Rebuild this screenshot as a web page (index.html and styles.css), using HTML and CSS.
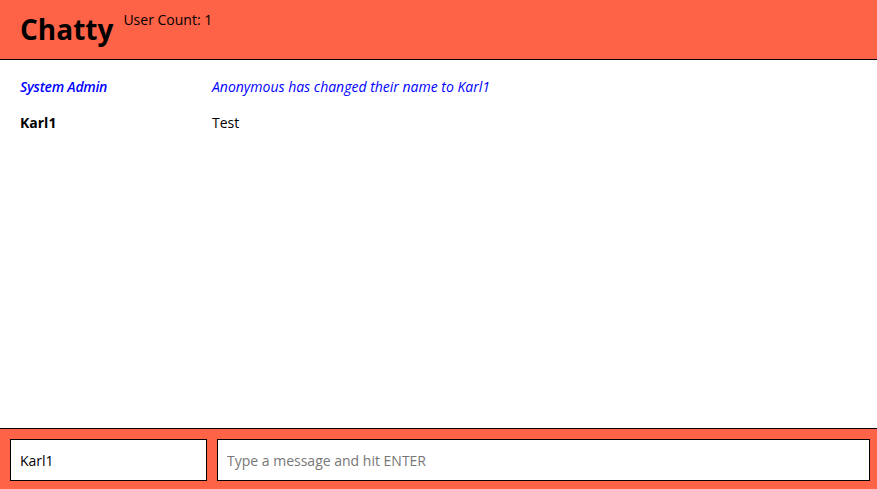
FILE: index.html
```html
<!DOCTYPE html>
<html>
<head>
<meta charset="utf-8">
<link rel="stylesheet" href="styles.css">
</head>
<body>
<div class="app">
  <header class="header">
    <h1 class="title">Chatty</h1>
    <span class="count">User Count: 1</span>
  </header>
  <main class="messages">
    <div class="msg system">
      <span class="name">System Admin</span>
      <span class="text">Anonymous has changed their name to Karl1</span>
    </div>
    <div class="msg">
      <span class="name">Karl1</span>
      <span class="text">Test</span>
    </div>
  </main>
  <footer class="footer">
    <input class="name-input" type="text" value="Karl1">
    <input class="msg-input" type="text" placeholder="Type a message and hit ENTER">
  </footer>
</div>
</body>
</html>
```
FILE: styles.css
```css
html, body {
  margin: 0;
  padding: 0;
  height: 100%;
}
body {
  font-family: "Open Sans", sans-serif;
  font-size: 14px;
  color: #000;
  background: #fff;
}
.app {
  display: flex;
  flex-direction: column;
  height: 489px;
}
.header {
  background: #ff6347;
  border-bottom: 1px solid #000;
  box-sizing: border-box;
  height: 60px;
  display: flex;
  align-items: flex-start;
  padding-left: 20px;
}
.title {
  margin: 0;
  font-size: 28px;
  font-weight: 700;
  line-height: 1;
  margin-top: 15px;
}
.count {
  margin-left: 10px;
  margin-top: 11px;
  font-size: 14px;
  line-height: 18px;
}
.messages {
  flex: 1;
  padding: 18px 20px 0;
}
.msg {
  display: flex;
  height: 36px;
  line-height: 18px;
}
.name {
  width: 192px;
  font-weight: 700;
}
.system {
  color: #0000ff;
  font-style: italic;
}
.system .name {
  font-weight: 600;
  letter-spacing: -0.25px;
}
.footer {
  background: #ff6347;
  border-top: 1px solid #000;
  height: 61px;
  box-sizing: border-box;
  display: flex;
  gap: 10px;
  padding: 10px 7px 0 10px;
}
.footer input {
  height: 42px;
  box-sizing: border-box;
  border: 1px solid #000;
  margin: 0;
  padding: 0 9px;
  font-family: "Open Sans", sans-serif;
  font-size: 14px;
  color: #000;
  background: #fff;
  outline: none;
}
.name-input {
  width: 197px;
}
.msg-input {
  flex: 1;
}
.msg-input::placeholder {
  color: #777;
}
```
